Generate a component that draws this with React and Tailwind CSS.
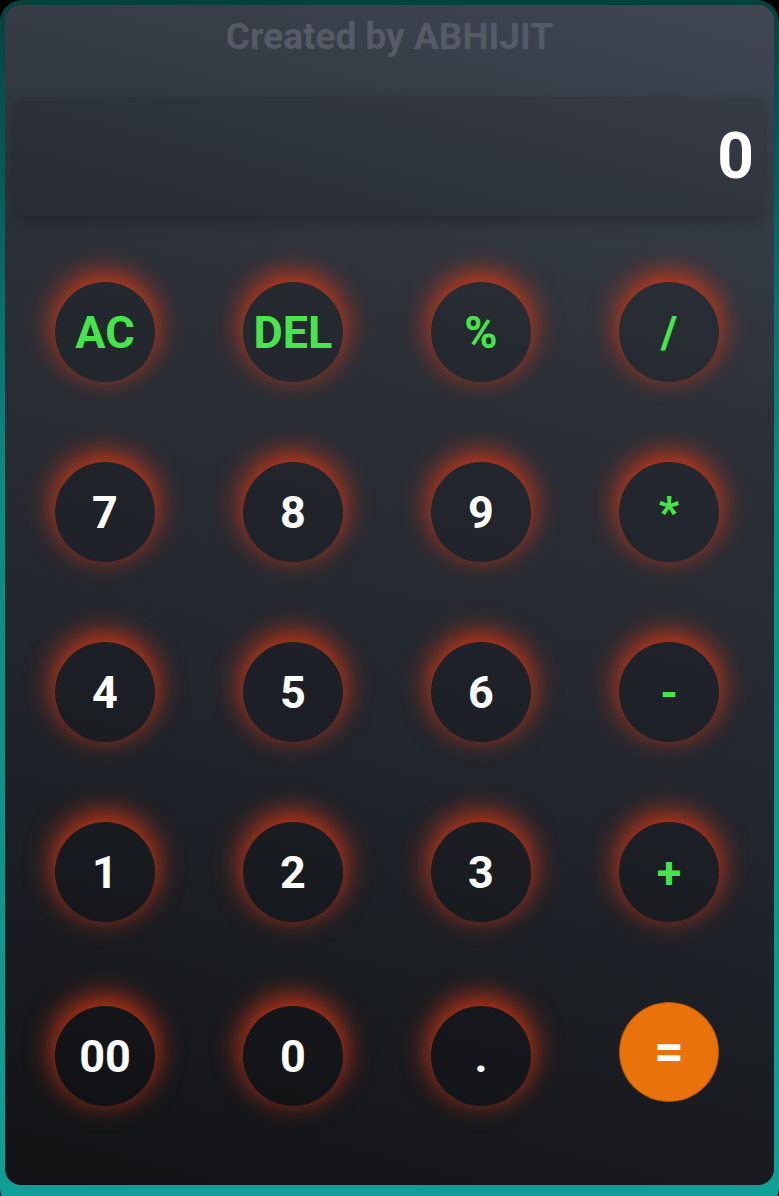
import React from "react";

const rows = [
  [
    { t: "AC", g: true },
    { t: "DEL", g: true },
    { t: "%", g: true },
    { t: "/", g: true },
  ],
  [
    { t: "7" },
    { t: "8" },
    { t: "9" },
    { t: "*", g: true },
  ],
  [
    { t: "4" },
    { t: "5" },
    { t: "6" },
    { t: "-", g: true },
  ],
  [
    { t: "1" },
    { t: "2" },
    { t: "3" },
    { t: "+", g: true },
  ],
  [
    { t: "00" },
    { t: "0" },
    { t: "." },
    { t: "=", eq: true },
  ],
];

function Btn({ b }) {
  if (b.eq) {
    return (
      <div className="flex justify-center">
        <button className="w-[100px] h-[100px] -translate-y-[4px] rounded-full bg-[#ea720a] border border-[#5a2a05]/40 text-white text-[52px] font-bold flex items-center justify-center leading-none">
          {b.t}
        </button>
      </div>
    );
  }
  return (
    <div className="flex justify-center">
      <button
        className={
          "w-[100px] h-[100px] rounded-full bg-black/15 shadow-[0_-7px_28px_2px_rgba(235,58,18,0.85)] flex items-center justify-center text-[45px] font-bold leading-none " +
          (b.g ? "text-[#46e54a]" : "text-white")
        }
      >
        {b.t}
      </button>
    </div>
  );
}

export default function App() {
  return (
    <div
      className="w-[779px] h-[1196px] bg-black overflow-hidden"
      style={{ fontFamily: "Roboto, 'Noto Sans', sans-serif" }}
    >
      <div className="w-[779px] h-[1210px] rounded-[22px] bg-[linear-gradient(180deg,#07413e_0%,#0c8a84_40%,#10a097_100%)] pt-[5px] px-[5px] pb-[11px] shadow-[0_0_8px_rgba(0,0,0,0.8)]">
        <div className="h-[1180px] rounded-[16px] bg-[linear-gradient(195deg,#404753_0%,#2c3139_30%,#22262d_60%,#111214_100%)] flex flex-col">
          <div className="pt-[11px] h-[92px] text-center text-[37px] font-bold text-[#555b66] leading-[42px]">
            Created by ABHIJIT
          </div>
          <div className="mx-[10px] h-[119px] rounded-[12px] bg-black/10 shadow-[0_6px_14px_rgba(0,0,0,0.25)] flex items-center justify-end pr-[10px]">
            <span className="text-white font-bold text-[64px] leading-none">0</span>
          </div>
          <div className="pl-[6px] pt-[66px] flex flex-col">
            {rows.map((r, i) => (
              <div
                key={i}
                className={
                  "grid grid-cols-4 w-[752px] " +
                  (i === 0 ? "" : i === 4 ? "mt-[84px]" : "mt-[80px]")
                }
              >
                {r.map((b) => (
                  <Btn key={b.t} b={b} />
                ))}
              </div>
            ))}
          </div>
        </div>
      </div>
    </div>
  );
}
